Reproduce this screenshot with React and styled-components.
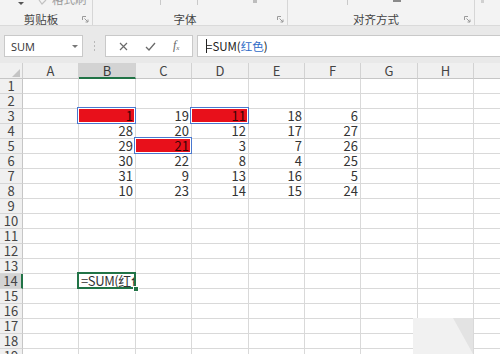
import React from 'react';
import styled, { createGlobalStyle } from 'styled-components';

const Global = createGlobalStyle`
  html, body { margin: 0; padding: 0; background: #fff; overflow: hidden; }
  body { width: 500px; height: 354px; font-family: "Noto Sans CJK SC", "Noto Sans", sans-serif; }
  * { box-sizing: border-box; }
`;

const Page = styled.div`
  position: relative;
  width: 500px;
  height: 354px;
  overflow: hidden;
  display: flex;
  flex-direction: column;
`;

/* ---------- Ribbon ---------- */
const Ribbon = styled.div`
  height: 26px;
  flex: none;
  display: flex;
  background: #f3f3f3;
  border-bottom: 1px solid #dadada;
  overflow: hidden;
`;

const Group = styled.div`
  width: ${p => p.$w}px;
  flex: none;
  height: 25px;
  border-right: ${p => (p.$last ? 'none' : '1px solid #d6d6d6')};
  display: flex;
  flex-direction: column;
`;

const TopStrip = styled.div`
  height: 13px;
  display: flex;
  align-items: flex-start;
  overflow: hidden;
`;

const LabelRow = styled.div`
  height: 12px;
  display: flex;
  align-items: center;
  padding-right: 3px;
`;

const GroupLabel = styled.span`
  flex: 1;
  text-align: center;
  font-size: 11.5px;
  line-height: 12px;
  color: #444;
`;

const Tick = styled.span`
  display: block;
  flex: none;
  width: ${p => p.$w || 1}px;
  height: ${p => p.$h || 5}px;
  background: ${p => p.$c || '#c9c9c9'};
  margin-left: ${p => p.$ml}px;
`;

const DropArrow = styled.span`
  display: block;
  flex: none;
  margin-left: ${p => p.$ml}px;
  margin-top: 2px;
  width: 0;
  height: 0;
  border-left: 3px solid transparent;
  border-right: 3px solid transparent;
  border-top: 3px solid #555;
`;

const CutText = styled.span`
  flex: none;
  font-size: 11.5px;
  line-height: 12px;
  margin-top: -7px;
  margin-left: 3px;
  color: #9a9a9a;
`;

const Launcher = () => (
  <svg width="7" height="7" viewBox="0 0 7 7" style={{ flex: 'none' }}>
    <path d="M0.5 4 V0.5 H4" fill="none" stroke="#9a9a9a" strokeWidth="1" />
    <path d="M2.5 2.5 L6 6 M6 3.5 V6 H3.5" fill="none" stroke="#9a9a9a" strokeWidth="1" />
  </svg>
);

const Brush = () => (
  <svg width="11" height="6" viewBox="0 0 11 6" style={{ flex: 'none', marginLeft: 14 }}>
    <path d="M1 0 L4 4 L8 0" fill="none" stroke="#c2c2c2" strokeWidth="1.2" />
  </svg>
);

/* ---------- Formula bar ---------- */
const FormulaBar = styled.div`
  height: 37px;
  flex: none;
  background: #e9e9e9;
  display: flex;
  align-items: flex-start;
  padding: 9px 0 0 4px;
`;

const Box = styled.div`
  height: 22px;
  background: #fff;
  border: 1px solid #c9c9c9;
  display: flex;
  align-items: center;
  flex: ${p => (p.$grow ? 1 : 'none')};
  width: ${p => (p.$w ? `${p.$w}px` : 'auto')};
  margin-left: ${p => p.$ml || 0}px;
  border-right: ${p => (p.$grow ? 'none' : '1px solid #c9c9c9')};
`;

const NameText = styled.span`
  flex: 1;
  padding-left: 6px;
  font-family: "Open Sans", "Noto Sans", sans-serif;
  font-size: 11px;
  color: #333;
`;

const NameArrow = styled.span`
  width: 0;
  height: 0;
  margin-right: 4px;
  border-left: 3px solid transparent;
  border-right: 3px solid transparent;
  border-top: 3px solid #777;
`;

const Dots = styled.div`
  width: 22px;
  height: 22px;
  flex: none;
  display: flex;
  flex-direction: column;
  align-items: center;
  justify-content: center;
  gap: 2px;
`;

const Dot = styled.span`
  width: 1px;
  height: 2px;
  background: #b9b9b9;
`;

const FxButtons = styled.div`
  flex: 1;
  display: flex;
  align-items: center;
  justify-content: space-around;
  padding: 0 4px;
`;

const FxLabel = styled.span`
  font-family: "Liberation Serif", serif;
  font-style: italic;
  font-size: 12px;
  color: #666;
  line-height: 12px;
  & > sub { font-size: 7px; vertical-align: -1px; }
`;

const FormulaText = styled.div`
  padding-left: 8px;
  font-size: 11.5px;
  color: #222;
  display: flex;
  align-items: center;
  white-space: nowrap;
`;

const Caret = styled.span`
  display: inline-block;
  width: 1px;
  height: 14px;
  background: #222;
  margin-right: -1px;
`;

const Ref = styled.span`
  color: #2f6bc7;
`;

/* ---------- Sheet ---------- */
const COLS = [56, 57, 56, 57, 56, 56, 57, 56, 60];
const LETTERS = ['A', 'B', 'C', 'D', 'E', 'F', 'G', 'H', ''];

const Sheet = styled.div`
  flex: 1;
  background: #fff;
  display: grid;
  grid-template-columns: 23px ${COLS.map(c => `${c}px`).join(' ')};
  grid-template-rows: 16px;
  grid-auto-rows: 15px;
  font-size: 13px;
  line-height: 14px;
  color: #333;
`;

const Corner = styled.div`
  background: #f0f0f0;
  border-right: 1px solid #cfcfcf;
  border-bottom: 1px solid #c6c6c6;
  display: flex;
  align-items: flex-end;
  justify-content: flex-end;
  padding: 0 2px 1px 0;
`;

const ColHead = styled.div`
  background: ${p => (p.$active ? '#d3d3d3' : '#f0f0f0')};
  border-right: 1px solid #d2d2d2;
  border-bottom: ${p => (p.$active ? '2px solid #217346' : '1px solid #c6c6c6')};
  text-align: center;
  line-height: 15px;
  color: ${p => (p.$active ? '#3a3a3a' : '#444')};
`;

const RowHead = styled.div`
  background: ${p => (p.$active ? '#d3d3d3' : '#f0f0f0')};
  border-right: ${p => (p.$active ? '2px solid #217346' : '1px solid #c6c6c6')};
  border-bottom: 1px solid #d6d6d6;
  text-align: center;
  line-height: 14px;
  color: #444;
`;

const Cell = styled.div`
  position: relative;
  border-right: 1px solid #d9d9d9;
  border-bottom: 1px solid #d9d9d9;
  line-height: 14px;
  text-align: ${p => (p.$left ? 'left' : 'right')};
  padding: ${p => (p.$left ? '0 0 0 2px' : '0 2px 0 0')};
`;

const CellText = styled.span`
  position: relative;
  z-index: 2;
  display: block;
  white-space: nowrap;
  overflow: ${p => (p.$clip ? 'hidden' : 'visible')};
  font-size: 13px;
  letter-spacing: ${p => (p.$clip ? '-0.4px' : '0')};
  color: ${p => (p.$onRed ? '#3b0505' : '#333')};
`;

const RedMark = styled.div`
  position: absolute;
  z-index: 1;
  top: -2px;
  left: -2px;
  right: -1px;
  bottom: -1px;
  border: 1.5px solid #4a78cf;
  box-shadow: inset 0 0 0 1px #fff;
  background: #e8101b;
`;

const ActiveFrame = styled.div`
  position: absolute;
  z-index: 3;
  top: -2px;
  left: -2px;
  right: -1px;
  bottom: -1px;
  border: 2px solid #217346;
`;

const FillHandle = styled.div`
  position: absolute;
  z-index: 4;
  right: -4px;
  bottom: -4px;
  width: 6px;
  height: 6px;
  background: #217346;
  border: 1px solid #fff;
`;

const Watermark = styled.svg`
  position: absolute;
  left: 413px;
  top: 318px;
`;

const DATA = {
  3: { B: 1, C: 19, D: 11, E: 18, F: 6 },
  4: { B: 28, C: 20, D: 12, E: 17, F: 27 },
  5: { B: 29, C: 21, D: 3, E: 7, F: 26 },
  6: { B: 30, C: 22, D: 8, E: 4, F: 25 },
  7: { B: 31, C: 9, D: 13, E: 16, F: 5 },
  8: { B: 10, C: 23, D: 14, E: 15, F: 24 },
};
const RED = new Set(['B3', 'D3', 'C5']);

export default function App() {
  const rows = Array.from({ length: 19 }, (_, i) => i + 1);
  return (
    <Page>
      <Global />
      <Ribbon>
        <Group $w={93}>
          <TopStrip>
            <DropArrow $ml={18} />
            <Brush />
            <CutText>格式刷</CutText>
          </TopStrip>
          <LabelRow>
            <GroupLabel>剪贴板</GroupLabel>
            <Launcher />
          </LabelRow>
        </Group>
        <Group $w={195}>
          <TopStrip>
            <Tick $ml={67} />
            <Tick $ml={36} />
            <Tick $ml={55} $h={3} $w={4} $c="#bdbdbd" />
          </TopStrip>
          <LabelRow>
            <GroupLabel>字体</GroupLabel>
            <Launcher />
          </LabelRow>
        </Group>
        <Group $w={187}>
          <TopStrip>
            <Tick $ml={59} />
            <Tick $ml={45} $w={8} $h={2} $c="#8a8a8a" />
          </TopStrip>
          <LabelRow>
            <GroupLabel>对齐方式</GroupLabel>
            <Launcher />
          </LabelRow>
        </Group>
        <Group $w={30} $last>
          <TopStrip>
            <Tick $ml={6} $h={3} $w={3} $c="#d0d0d0" />
          </TopStrip>
        </Group>
      </Ribbon>

      <FormulaBar>
        <Box $w={79}>
          <NameText>SUM</NameText>
          <NameArrow />
        </Box>
        <Dots>
          <Dot />
          <Dot />
          <Dot />
        </Dots>
        <Box $w={88}>
          <FxButtons>
            <svg width="9" height="9" viewBox="0 0 9 9">
              <path d="M1 1 L8 8 M8 1 L1 8" stroke="#6a6a6a" strokeWidth="1.2" />
            </svg>
            <svg width="11" height="9" viewBox="0 0 11 9">
              <path d="M1 5 L4 8 L10 1" fill="none" stroke="#6a6a6a" strokeWidth="1.3" />
            </svg>
            <FxLabel>
              f<sub>x</sub>
            </FxLabel>
          </FxButtons>
        </Box>
        <Box $grow $ml={4}>
          <FormulaText>
            <Caret />
            =SUM(<Ref>红色</Ref>)
          </FormulaText>
        </Box>
      </FormulaBar>

      <Sheet>
        <Corner>
          <svg width="8" height="8" viewBox="0 0 8 8">
            <path d="M8 0 L8 8 L0 8 Z" fill="#c4c4c4" />
          </svg>
        </Corner>
        {LETTERS.map((l, i) => (
          <ColHead key={`h${i}`} $active={l === 'B'}>
            {l}
          </ColHead>
        ))}
        {rows.map(r => (
          <React.Fragment key={r}>
            <RowHead $active={r === 14}>{r}</RowHead>
            {LETTERS.map((l, i) => {
              const id = `${l}${r}`;
              const val = DATA[r] && DATA[r][l];
              const red = RED.has(id);
              const active = id === 'B14';
              return (
                <Cell key={`${r}-${i}`} $left={active}>
                  {red && <RedMark />}
                  {val !== undefined && <CellText $onRed={red}>{val}</CellText>}
                  {active && (
                    <>
                      <CellText $clip>=SUM(红色</CellText>
                      <ActiveFrame />
                      <FillHandle />
                    </>
                  )}
                </Cell>
              );
            })}
          </React.Fragment>
        ))}
      </Sheet>

      <Watermark width="62" height="36" viewBox="0 0 62 36">
        <rect x="0" y="0" width="60" height="36" fill="#f1f1f1" />
        <path d="M40 0 L60 0 L60 36 Z" fill="#e3e3e3" />
      </Watermark>
    </Page>
  );
}
